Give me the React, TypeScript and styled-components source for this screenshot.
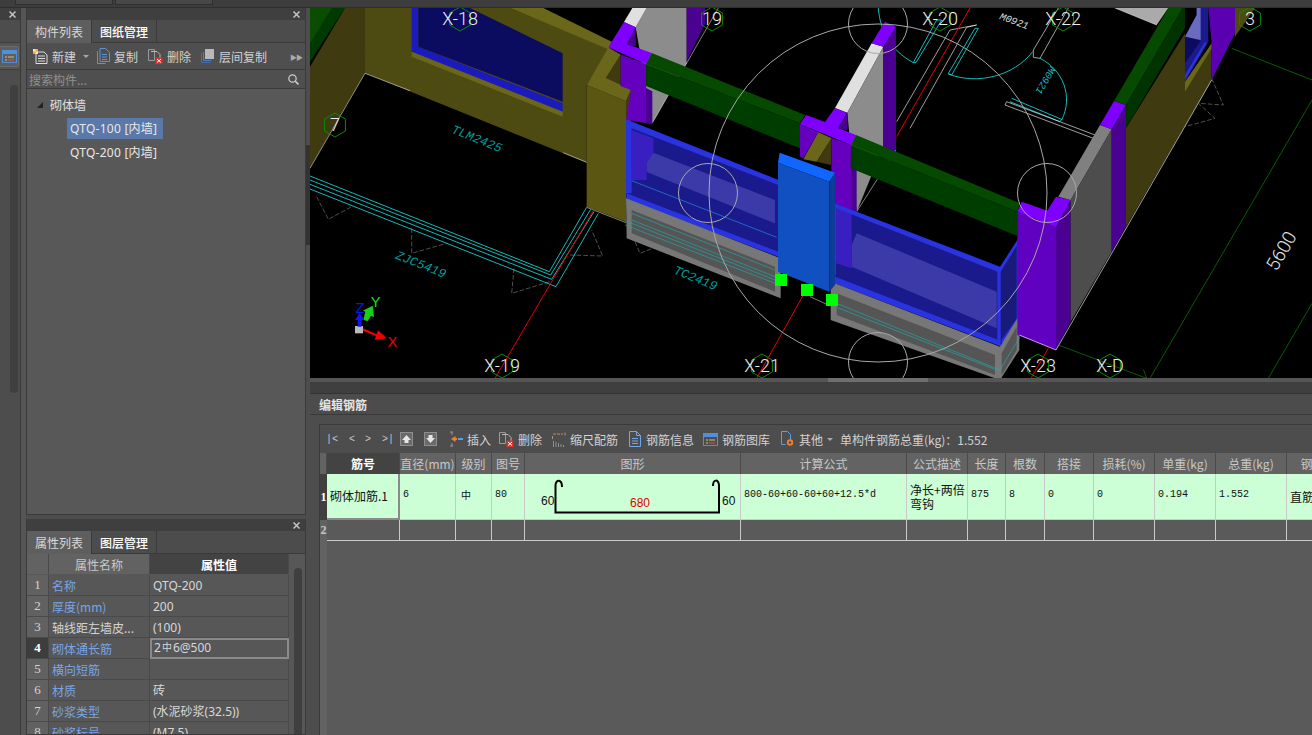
import React from "react";
import styled, { createGlobalStyle } from "styled-components";

const Global = createGlobalStyle`
  html, body { margin: 0; padding: 0; background: #4d4d4d; overflow: hidden; }
  * { box-sizing: border-box; }
`;
const UI = `"Noto Sans", "Noto Sans CJK SC", "Liberation Sans", sans-serif`;
const CJK = `"Noto Sans CJK SC", "Noto Sans", sans-serif`;
const MONO = `"Liberation Mono", "Noto Sans CJK SC", monospace`;

const Page = styled.div`
  width: 1312px; height: 735px; overflow: hidden; display: flex; flex-direction: column;
  background: #4d4d4d; font-family: ${UI}; font-size: 12px; color: #ddd;
`;
const TopBar = styled.div`
  height: 8px; flex: none; display: flex; gap: 2px; padding-left: 15px;
  background: #3d3d3d; border-bottom: 1px solid #2f2f2f;
`;
const TopTab = styled.div`
  width: 98px; height: 5px; background: #474747; border: 1px solid #2f2f2f; border-top: 0;
`;
const Body = styled.div`flex: 1; display: flex; min-height: 0;`;
const Strip = styled.div`
  width: 21px; flex: none; display: flex; flex-direction: column; background: #4d4d4d; border-right: 1px solid #3a3a3a;
`;
const StripHead = styled.div`
  height: 12px; background: #3f3f3f; display: flex; align-items: center; justify-content: flex-end; padding-right: 4px;
`;
const StripIcon = styled.div`
  margin-top: 22px; height: 28px; display: flex; align-items: center; background: #555;
  border-top: 1px solid #3e3e3e; border-bottom: 1px solid #3e3e3e;
`;
const StripBtn = styled.div`
  width: 19px; height: 21px; display: flex; align-items: center; justify-content: center;
  border: 1px solid #6c6c6c; border-left: 0; border-radius: 0 3px 3px 0; background: #5e5e5e;
`;
const StripBar = styled.div`
  width: 8px; height: 308px; margin: 15px 0 0 10px; border-radius: 4px; background: #3f3f3f;
`;
const Gutter = styled.div`width: 5px; flex: none; background: #555;`;
const Panels = styled.div`width: 280px; flex: none; display: flex; flex-direction: column;`;
const Panel = styled.section<{ $h: number }>`
  height: ${p => p.$h}px; flex: none; display: flex; flex-direction: column; background: #555;
  border: 1px solid #3a3a3a; border-top: 0; overflow: hidden;
`;
const PanelHead = styled.div`
  height: 12px; flex: none; background: #3f3f3f; display: flex; align-items: center; justify-content: flex-end; padding-right: 5px;
`;
const Tabs = styled.div`
  height: 23px; flex: none; display: flex; background: #4c4c4c; border-bottom: 1px solid #3a3a3a;
`;
const Tab = styled.div<{ $on?: boolean }>`
  width: 65px; display: flex; align-items: center; justify-content: center; font-size: 12px; font-family: ${CJK};
  background: ${p => (p.$on ? "#5e5e5e" : "#4c4c4c")}; color: ${p => (p.$on ? "#d8d8d8" : "#fff")};
  font-weight: ${p => (p.$on ? 400 : 500)}; border-right: 1px solid #3a3a3a; height: ${p => (p.$on ? "23px" : "22px")};
`;
const ToolRow = styled.div`
  height: 27px; flex: none; display: flex; align-items: center; background: #4f4f4f; border-bottom: 1px solid #3a3a3a; position: relative;
`;
const ToolItem = styled.div<{ $w: number }>`
  width: ${p => p.$w}px; flex: none; display: flex; align-items: center; gap: 4px; color: #d2d2d2; font-family: ${CJK}; white-space: nowrap;
`;
const More = styled.div`
  position: absolute; right: 3px; top: 9px; color: #aaa; font-size: 7px; letter-spacing: -1px;
`;
const Search = styled.div`
  height: 19px; flex: none; display: flex; align-items: center; justify-content: space-between; padding: 0 6px 0 2px;
  background: #4f4f4f; border-bottom: 1px solid #3a3a3a; color: #8f8f8f; font-family: ${CJK};
`;
const Tree = styled.div`flex: 1; background: #585858; padding-top: 5px;`;
const TreeRoot = styled.div`
  height: 21px; display: flex; align-items: center; padding-left: 10px; gap: 7px; color: #e0e0e0; font-family: ${CJK};
`;
const TreeItem = styled.div<{ $on?: boolean }>`
  margin: 3px 0 0 40px; width: 96px; height: 21px; line-height: 21px; padding-left: 3px; white-space: nowrap; letter-spacing: .25px;
  background: ${p => (p.$on ? "#5a78a8" : "transparent")}; color: #e8e8e8; font-size: 12px;
`;
const Caret = styled.span`
  width: 0; height: 0; border-left: 3px solid transparent; border-right: 3px solid transparent; border-top: 3px solid #aaa; flex: none;
`;
const TreeArrow = styled.span`
  width: 0; height: 0; border-bottom: 6px solid #222; border-left: 6px solid transparent; flex: none;
`;
const Spacer = styled.div<{ $h: number }>`height: ${p => p.$h}px; flex: none; background: #4d4d4d;`;

const PropWrap = styled.div`flex: 1; display: flex; background: #575757; min-height: 0;`;
const PropGrid = styled.div`
  width: 262px; flex: none; display: grid; grid-template-columns: 22px 101px 139px; grid-auto-rows: 21px; align-content: start;
`;
const PropHead = styled.div<{ $dark?: boolean }>`
  height: 20px; display: flex; align-items: center; justify-content: center; font-family: ${CJK};
  background: ${p => (p.$dark ? "#434343" : "#626262")}; color: ${p => (p.$dark ? "#fff" : "#c9c9c9")};
  font-weight: ${p => (p.$dark ? 700 : 400)}; border-right: 1px solid #4a4a4a;
`;
const PropNo = styled.div<{ $on?: boolean }>`
  display: flex; align-items: center; justify-content: center; font-family: "Liberation Serif", serif; font-size: 13px;
  font-weight: ${p => (p.$on ? 700 : 400)}; background: ${p => (p.$on ? "#3d3d3d" : "#616161")}; color: ${p => (p.$on ? "#fff" : "#d4d4d4")};
  border-bottom: 1px solid #4a4a4a; border-right: 1px solid #4a4a4a;
`;
const PropName = styled.div<{ $plain?: boolean }>`
  display: flex; align-items: center; padding-left: 3px; color: ${p => (p.$plain ? "#d4d4d4" : "#79a5e6")};
  border-bottom: 1px solid #4a4a4a; border-right: 1px solid #4a4a4a;
  white-space: nowrap; overflow: hidden; font-family: ${CJK};
`;
const PropVal = styled.div<{ $on?: boolean }>`
  display: flex; align-items: center; color: #d8d8d8; white-space: nowrap; font-family: ${UI};
  padding: ${p => (p.$on ? "0 0 2px 2px" : "0 0 0 3px")};
  border: ${p => (p.$on ? "2px solid #8a8a8a" : "0")}; border-bottom: ${p => (p.$on ? "2px solid #8a8a8a" : "1px solid #4a4a4a")};
  border-right: ${p => (p.$on ? "2px solid #8a8a8a" : "1px solid #4a4a4a")};
`;
const Sup = styled.span`font-size: 10px; margin: -3px 1px 0; font-family: ${CJK};`;
const PropScroll = styled.div`flex: 1; padding: 14px 0 0 5px;`;
const Thumb = styled.div`width: 8px; height: 170px; border-radius: 4px; background: #3f3f3f;`;
const Split = styled.div`width: 4px; flex: none; background: #4d4d4d; padding-top: 137px;`;
const SplitThumb = styled.div`height: 100px; background: #333;`;

const Main = styled.div`flex: 1; min-width: 0; display: flex; flex-direction: column;`;
const Canvas = styled.svg`width: 1002px; height: 370px; flex: none; display: block; background: #000;`;
const HSplit = styled.div`
  height: 4px; flex: none; background: #555; display: flex; padding-left: 518px;
`;
const HSplitKnob = styled.div`width: 100px; height: 4px; background: #6e6e6e;`;
const DarkBand = styled.div`height: 12px; flex: none; background: #3f3f3f; border-bottom: 1px solid #333;`;
const Title = styled.div`
  height: 21px; flex: none; background: #4c4c4c; border-bottom: 1px solid #393939; display: flex; align-items: center; padding-left: 9px;
  font-weight: 700; color: #e4e4e4; font-family: ${CJK};
`;
const Editor = styled.div`flex: 1; background: #4d4d4d; padding: 9px 0 0 9px; min-height: 0;`;
const EditorInner = styled.div`height: 100%; display: flex; flex-direction: column; border-top: 1px solid #3a3a3a; border-left: 1px solid #3a3a3a;`;
const EditBar = styled.div`
  height: 28px; flex: none; display: flex; align-items: center; padding-left: 6px; color: #d2d2d2; white-space: nowrap;
`;
const Nav = styled.span<{ $w: number }>`
  width: ${p => p.$w}px; flex: none; font-family: "Liberation Mono", monospace; font-size: 10px; color: #c8c8c8;
`;
const Grid = styled.div`
  display: grid; flex: none;
  grid-template-columns: 7px 73px 56px 36px 33px 216px 166px 61px 38px 39px 49px 61px 61px 71px 40px;
  grid-template-rows: 21px 46px 21px; width: 1027px;
`;
const Head = styled.div<{ $dark?: boolean }>`
  display: flex; align-items: center; justify-content: center; white-space: nowrap; overflow: hidden; font-family: ${CJK};
  background: ${p => (p.$dark ? "#434343" : "#636363")}; color: ${p => (p.$dark ? "#fff" : "#c8c8c8")};
  font-weight: ${p => (p.$dark ? 700 : 400)}; border-right: 1px solid #4a4a4a;
`;
const RowNo = styled.div<{ $on?: boolean }>`
  display: flex; align-items: center; justify-content: center; font-family: "Liberation Serif", serif; font-weight: 700; font-size: 12px;
  background: ${p => (p.$on ? "#404040" : "#626262")}; color: ${p => (p.$on ? "#fff" : "#c5c5c5")}; overflow: visible;
`;
const Cell = styled.div<{ $sel?: boolean; $mono?: boolean; $pad?: number }>`
  background: #ccffd5; color: #111; display: flex; align-items: center;
  padding: ${p => (p.$pad !== undefined ? `0 0 0 ${p.$pad}px` : p.$mono ? "0 0 3px 3px" : "0 0 0 3px")};
  border-right: ${p => (p.$sel ? "2px solid #8a8a8a" : "1px solid #c9c9c9")}; border-bottom: ${p => (p.$sel ? "2px solid #8a8a8a" : "1px solid #c9c9c9")};
  font-family: ${p => (p.$mono ? MONO : CJK)}; font-size: ${p => (p.$mono ? "10px" : "12px")}; line-height: 14px; white-space: ${p => (p.$mono ? "nowrap" : "normal")}; overflow: hidden;
`;
const EmptyCell = styled.div`background: #5a5a5a; border-right: 1px solid #c9c9c9; border-bottom: 1px solid #c9c9c9;`;
const ShapeSvg = styled.svg`width: 215px; height: 45px; display: block;`;
const GridRest = styled.div`flex: 1; background: #5a5a5a; display: flex;`;
const RestEdge = styled.div`width: 7px; background: #626262;`;

const Close = () => (
  <svg width="7" height="7" viewBox="0 0 7 7"><path d="M.5.5l6 6M6.5.5l-6 6" stroke="#c4c4c4" strokeWidth="1.5" /></svg>
);
const Doc = ({ c = "#6fa8e8" }: { c?: string }) => (
  <svg width="14" height="16" viewBox="0 0 14 16" fill="none" stroke={c}>
    <path d="M1.5.5h7l4 4v11h-11zM8.5.5v4h4M4 7.5h6M4 10h6M4 12.5h6" />
  </svg>
);
const NewIc = () => (
  <svg width="15" height="15" viewBox="0 0 15 15" fill="none">
    <path d="M3 3h8l3 3v8.5H3z" stroke="#ddd" /><path d="M5 7h7M5 9.5h7M5 12h7" stroke="#ddd" />
    <rect x="0" y="0" width="5" height="5" fill="#f2a33a" /><path d="M0 0h2.5v2.5H0zM2.5 2.5H5V5H2.5z" fill="#ffe6b0" />
  </svg>
);
const CopyIc = () => (
  <svg width="13" height="16" viewBox="0 0 13 16" fill="none" stroke="#5e93d6">
    <path d="M.5 3v12.5h8M3 .5h5.5l4 4v9H3zM5 6.5h5M5 9h5M5 11.5h5" />
  </svg>
);
const DelIc = () => (
  <svg width="15" height="15" viewBox="0 0 15 15" fill="none">
    <path d="M.5.5h6v11h-6z" stroke="#999" /><path d="M3 2.5h6l3 3v4" stroke="#bbb" />
    <rect x="7.5" y="8.5" width="7" height="6.5" fill="#d9332e" /><path d="M9 10l4 3.5M13 10l-4 3.5" stroke="#fff" />
  </svg>
);
const LayerIc = () => (
  <svg width="14" height="14" viewBox="0 0 14 14">
    <path d="M.5 4v9.5h9" fill="none" stroke="#3f6fb0" /><path d="M2.5 3v8.5h8" fill="none" stroke="#4f80c0" /><rect x="4" y="0" width="9" height="10" fill="#b9b9b9" />
  </svg>
);
const SearchIc = () => (
  <svg width="11" height="11" viewBox="0 0 11 11" fill="none" stroke="#ccc" strokeWidth="1.2"><circle cx="4.5" cy="4.5" r="3.7" /><path d="M7.3 7.3L10.5 10.5" strokeWidth="1.6" /></svg>
);
const LibIc = () => (
  <svg width="15" height="13" viewBox="0 0 15 13">
    <rect x=".5" y=".5" width="14" height="12" fill="none" stroke="#4f8fdc" /><rect x="1" y="1" width="13" height="3" fill="#4f8fdc" />
    <path d="M3 7h2M6 7h6M3 10h2" stroke="#d8c070" /><path d="M6 10h6" stroke="#cc5555" />
  </svg>
);
const ArrowBox = ({ up }: { up?: boolean }) => (
  <svg width="13" height="14" viewBox="0 0 13 14">
    <rect x=".5" y=".5" width="12" height="13" fill="#6a6a6a" stroke="#8e8e8e" />
    <path d={up ? "M6.5 3L11 8H8.5v3h-4V8H2z" : "M6.5 11L11 6H8.5V3h-4v3H2z"} fill="#e6e6e6" />
  </svg>
);
const InsertIc = () => (
  <svg width="14" height="16" viewBox="0 0 14 16" fill="none">
    <path d="M1 1h3M1 15h3" stroke="#999" /><path d="M3 1v3M3 12v3" stroke="#999" />
    <path d="M6.5 5L2 8l4.500 3V9H8V7H6.500z" fill="#ef7f2c" /><path d="M9 7h5v2H9z" fill="#5e9fe0" />
  </svg>
);
const ScaleIc = () => (
  <svg width="14" height="15" viewBox="0 0 14 15" fill="none">
    <path d="M1 2h10" stroke="#ef7f2c" strokeDasharray="3 1" /><path d="M.5 4v3M13 .5v3" stroke="#999" />
    <path d="M1.500 15v-6M4 15v-5M6.500 15v-4M9 15v-3M11.500 15v-2" stroke="#8f8f8f" />
  </svg>
);
const OtherIc = () => (
  <svg width="15" height="16" viewBox="0 0 15 16" fill="none">
    <path d="M1.500.5h6l3 3v6M1.500.5v13h4" stroke="#5e9fe0" />
    <circle cx="10" cy="11.500" r="3.200" fill="#ef7f2c" /><circle cx="10" cy="11.500" r="1.200" fill="#4d4d4d" />
  </svg>
);
const Space = styled.span<{ $w: number }>`display: inline-block; flex: none; width: ${p => p.$w}px;`;

const props: [string, React.ReactNode][] = [
  ["名称", "QTQ-200"], ["厚度(mm)", "200"], ["轴线距左墙皮...", "(100)"], ["砌体通长筋", <>2<Sup>中</Sup>6@500</>],
  ["横向短筋", ""], ["材质", "砖"], ["砂浆类型", "(水泥砂浆(32.5))"], ["砂浆标号", "(M7.5)"],
];
const heads = ["直径(mm)", "级别", "图号", "图形", "计算公式", "公式描述", "长度", "根数", "搭接", "损耗(%)", "单重(kg)", "总重(kg)", "钢"];

const P = ({ d, f }: { d: string; f: string }) => <polygon points={d} fill={f} />;
const L = ({ d, c, w = 1.6, dash }: { d: string; c: string; w?: number; dash?: string }) => (
  <polyline points={d} fill="none" stroke={c} strokeWidth={w} strokeDasharray={dash} />
);
const Hex = ({ x, y }: { x: number; y: number }) => {
  const pts = [0, 1, 2, 3, 4, 5].map(i => {
    const a = (Math.PI / 3) * i + Math.PI / 6;
    return `${(x + 12 * Math.cos(a)).toFixed(1)},${(y + 12 * Math.sin(a)).toFixed(1)}`;
  }).join(" ");
  return <polygon points={pts} fill="none" stroke="#0a8a0a" strokeWidth="1" />;
};
const Axis = ({ x, y, t }: { x: number; y: number; t: string }) => (
  <>
    <Hex x={x} y={y} />
    <text x={x} y={y + 6} fill="#eee" fontFamily="Roboto" fontWeight="300" fontSize="18" textAnchor="middle">{t}</text>
  </>
);
const Lab = ({ x, y, r, t, s = 36, c = "#009c9c" }: { x: number; y: number; r: number; t: string; s?: number; c?: string }) => (
  <text transform={`translate(${x} ${y}) rotate(${r})`} fill={c} fontFamily="Liberation Mono" fontStyle="italic" fontSize={s} textAnchor="middle" dominantBaseline="middle">{t}</text>
);

const CY = "#1fb0b0";
const Scene = () => (
  <Canvas viewBox="310 8 1002 370">
    <g transform="translate(310 0) scale(.33333)">
      <P d="0,24 105,24 0,185" f="#003a00" /><P d="0,24 65,24 0,130" f="#0a4d00" />
      <P d="0,200 105,24 165,24 165,220 0,505" f="#3f3a10" />
      <P d="165,24 600,24 895,145 830,255 830,488 165,220" f="#4d4a12" />
      <P d="600,24 700,24 905,125 895,148" f="#6b671a" />
      <P d="305,24 325,24 325,140 758,310 758,335 305,155" f="#1b1bbd" />
      <P d="325,24 480,24 758,160 758,305 325,140" f="#0b0b60" />
      <P d="305,155 758,335 758,350 305,170" f="#6b671a" />
      <P d="830,255 948,304 948,665 830,620" f="#5b5713" />
      <P d="948,304 963,269 963,365 948,360" f="#3f3a10" />
      <P d="888,234 932,164 932,259" f="#3f3a10" />
      <P d="830,255 895,142 932,164 888,234 963,269 948,304" f="#6b671a" />
      <L d="0,505 165,220 300,272" c="#eee" /><L d="760,458 830,487" c="#eee" /><L d="830,622 948,668" c="#eee" />
      <P d="977,82 1010,24 1130,24 1130,190 1027,369" f="#8c8c8c" />
      <P d="942,66 967,24 1010,24 977,82" f="#e0e0e0" />
      <P d="1130,24 1185,24 1185,70 1130,185" f="#4a0090" />
      <L d="1027,369 1225,24" c="#eee" />
      <P d="932,164 1008,192 1008,369 948,359 963,269 932,259" f="#6600bf" />
      <P d="1008,264 1027,274 1027,374 1008,369" f="#4a0090" />
      <P d="950,132 977,82 977,139" f="#4a0090" />
      <P d="895,142 942,66 977,82 950,132 1025,159 1008,192" f="#8000ff" />
      <P d="1008,192 1025,159 1485,345 1470,370" f="#054a00" />
      <P d="1008,192 1470,370 1470,445 1008,258" f="#003d00" />
      <P d="948,360 1405,540 1405,770 948,598" f="#1a1a8c" />
      <P d="965,390 1030,415 1030,478 1010,490 1010,540 965,540" f="#3a1fc0" />
      <P d="1010,490 1030,458 1395,600 1395,670 1010,516" f="#3c3aa8" />
      <P d="948,358 1405,540 1405,555 965,385 965,580 948,580" f="#2a33e0" />
      <P d="950,580 1405,755 1405,770 950,598" f="#2a33e0" />
      <L d="965,542 1400,712" c="#1f8fe0" w={2} />
      <P d="948,595 1400,770 1412,775 1412,895 950,715" f="#777" />
      <P d="965,630 1395,800 1395,875 965,700" f="#555" />
      <L d="965,640 1395,810" c={CY} w={1.8} /><L d="965,660 1395,830" c={CY} w={1.8} />
      <L d="945,662 1395,840" c={CY} w={1.8} /><L d="945,675 1395,850" c={CY} w={1.8} />
      <L d="20,590 55,658 125,620" c="#777" w={2} dash="14 6" />
      <L d="305,685 305,760 410,730" c="#777" w={2} dash="14 6" />
      <L d="612,805 605,880 720,845" c="#777" w={2} dash="14 6" />
      <L d="780,765 878,768 845,690" c="#777" w={2} dash="14 6" />
      <L d="975,725 990,760 1040,740" c="#777" w={2} dash="14 6" />
      <L d="0,528 718,815 830,622" c="#19e6e6" w={2.4} />
      <L d="0,540 722,825 842,628" c="#19e6e6" w={2.4} />
      <L d="0,553 725,838 852,635" c="#19e6e6" w={2.4} />
      <L d="0,567 738,860 865,640" c="#19e6e6" w={2.4} />
      <L d="850,632 555,1135" c="#e60000" w={3} />
      <L d="1480,885 1340,1135" c="#e60000" w={3} />
      <Lab x={500} y={418} r={22} t="TLM2425" s={38} />
      <Lab x={332} y={795} r={22} t="ZJC5419" s={38} />
      <Lab x={1156} y={836} r={22} t="TC2419" s={38} />
      <rect x="135" y="978" width="24" height="22" fill="#bbb" />
      <path d="M160 985l40 18 4-12 26 24-36 4 4-11-40-16z" fill="#f00000" />
      <path d="M160 960l6-25-8-3 30-15 4 35-9-5-10 16z" fill="#18d018" />
      <path d="M143 980v-20h-8l14-22 14 22h-8v20z" fill="#1414ee" />
      <text x="150" y="940" fill="#1414ee" fontFamily="Liberation Sans" fontSize="44" textAnchor="middle">Z</text>
      <text x="197" y="920" fill="#18e018" fontFamily="Liberation Sans" fontSize="44" textAnchor="middle">Y</text>
      <text x="247" y="1042" fill="#f00000" fontFamily="Liberation Sans" fontSize="44" textAnchor="middle">X</text>
    </g>
    <g transform="translate(810 0) scale(.33333)">
      <P d="915,24 1075,24 1040,75" f="#aaa" /><L d="915,24 1040,75" c="#eee" />
      <path d="M205 24C210 90 240 150 310 188" fill="none" stroke="#19e6e6" strokeWidth="2.400" />
      <L d="310,188 380,60 395,60 318,188 310,188" c="#19e6e6" w={2.4} />
      <L d="260,365 420,90 500,75 470,82 300,385" c="#eee" w={2} />
      <L d="260,410 480,24" c="#e60000" w={3} />
      <L d="415,220 495,85 505,85 425,225 415,220" c="#19e6e6" w={2.4} />
      <path d="M415 222C500 255 610 230 668 155" fill="none" stroke="#19e6e6" strokeWidth="2.400" />
      <L d="775,24 690,175 670,172 670,150 700,100 745,24" c="#eee" w={2} />
      <path d="M690 175C760 210 790 290 755 360" fill="none" stroke="#19e6e6" strokeWidth="2.400" />
      <L d="605,295 755,358 750,365 600,305" c="#19e6e6" w={2.4} />
      <L d="590,305 855,405 850,415 585,315 590,305" c="#eee" w={2} />
      <Lab x={612} y={65} r={20} t="M0921" s={30} c="#ddd" />
      <Lab x={705} y={240} r={120} t="M0921" s={30} c="#19bcbc" />
      <P d="75,324 185,130 220,140 112,338" f="#e0e0e0" />
      <P d="112,338 220,140 220,440 140,635" f="#8c8c8c" />
      <P d="185,130 225,65 258,80 220,140" f="#8000ff" />
      <P d="220,140 258,80 258,450 220,520" f="#4a0090" />
      <L d="140,635 258,450" c="#eee" />
      <P d="85,385 112,338 112,390" f="#4a0090" />
      <P d="-30,372 25,397 -20,475 -30,470" f="#6600bf" />
      <P d="25,397 65,415 20,485 -20,478" f="#6b671a" />
      <P d="65,415 63,495 20,485" f="#3f3a10" />
      <P d="65,415 123,435 123,630 63,610" f="#6600bf" />
      <P d="123,500 140,510 140,640 123,630" f="#4a0090" />
      <P d="-30,372 -12,345 45,366 75,324 111,339 84,384 138,405 123,435" f="#8000ff" />
      <P d="123,435 138,405 630,610 622,635" f="#054a00" />
      <P d="123,435 622,635 622,708 122,505" f="#003d00" />
      <P d="62,605 570,805 630,710 630,945 572,1035 62,845" f="#1a1a8c" />
      <P d="125,735 140,700 560,875 560,985 125,800" f="#3c3aa8" />
      <P d="78,625 125,640 125,805 78,790" f="#3a1fc0" />
      <P d="572,815 622,735 622,945 572,1015" f="#1a1a7a" />
      <P d="62,605 570,800 630,708 625,730 572,815 562,815 78,625 78,825 62,825" f="#2a33e0" />
      <P d="562,810 572,810 572,1035 562,1035" f="#2a33e0" />
      <P d="620,730 630,710 630,945 620,960" f="#2a33e0" />
      <P d="62,825 565,1020 575,1040 62,845" f="#2a33e0" />
      <P d="575,1020 628,945 628,950 575,1040" f="#2a33e0" />
      <P d="62,845 570,1040 628,945 628,1050 570,1140 62,960" f="#777" />
      <P d="80,880 555,1065 555,1125 80,945" f="#555" />
      <P d="575,1060 620,980 620,1050 575,1125" f="#555" />
      <L d="80,910 570,1110 630,1010" c={CY} w={1.8} /><L d="80,922 560,1110" c={CY} w={1.8} />
      <P d="-96,488 -91,458 75,518 58,545" f="#1066ff" />
      <P d="-96,488 58,545 58,875 -96,815" f="#1050c0" />
      <P d="58,545 75,518 75,855 58,875" f="#0d3e95" />
      <L d="660,1140 715,1045" c="#e60000" w={3} />
      <P d="622,635 738,682 738,1050 622,1005" f="#6000c0" />
      <P d="738,682 782,600 782,965 738,1050" f="#4a0090" />
      <P d="635,605 712,632 738,590 782,600 738,682 622,635" f="#8000ff" />
      <P d="745,590 870,375 905,388 782,600" f="#808080" />
      <P d="782,600 905,388 905,755 782,965" f="#4d4d4d" />
      <P d="870,375 912,303 948,315 905,388" f="#8000ff" />
      <P d="905,388 948,315 948,680 905,755" f="#4a0090" />
      <P d="948,385 1125,100 1125,270 1205,130 1205,240 948,680" f="#3f3a10" />
      <P d="912,303 1075,24 1118,24 948,315" f="#054a00" />
      <P d="948,315 1118,24 1160,24 948,385" f="#003300" />
      <P d="1125,110 1160,45 1160,24 1195,24 1195,125 1125,245" f="#1a1a8c" />
      <P d="1125,24 1160,24 1125,110" f="#000" />
      <P d="1125,110 1160,45 1160,24 1172,24 1172,120" f="#6a6ac0" />
      <P d="1125,110 1172,122 1125,190" f="#0b0b60" />
      <P d="1125,225 1185,125 1190,130 1125,240" f="#2a33e0" />
      <P d="1125,245 1205,130 1205,145 1125,275" f="#6b671a" />
      <P d="1195,24 1275,24 1275,100 1205,240 1205,130" f="#5a00b0" />
      <P d="1275,24 1335,24 1275,110" f="#4d4a12" />
      <L d="0,890 48,912" c="#eee" /><L d="628,1005 738,1050 1205,240" c="#eee" w={2} />
      <L d="1205,235 1240,315 1165,310 1215,355 1125,380" c="#777" w={2} dash="14 6" />
      <L d="1265,145 1506,240" c="#0a8a0a" w={2} />
      <L d="1020,1135 1506,300" c="#0a8a0a" w={2} />
      <L d="1375,1135 1506,910" c="#0a8a0a" w={2} />
      <L d="745,1035 1010,1135 1000,1108" c="#0a8a0a" w={2} />
      <text transform="translate(1418 755) rotate(-60)" fill="#e8e8e8" fontFamily="Roboto" fontWeight="300" fontSize="56" textAnchor="middle" dominantBaseline="middle">5600</text>
      <rect x="48" y="882" width="36" height="36" fill="#00ff00" />
    </g>
    <rect x="775" y="274" width="12" height="12" fill="#00ff00" />
    <rect x="801" y="284" width="12" height="12" fill="#00ff00" />
    <g fill="none" stroke="#a8a8a8" strokeWidth="1">
      <circle cx="878" cy="193" r="169" />
      <circle cx="708" cy="193" r="29.5" /><circle cx="1047" cy="193" r="29.5" />
      <circle cx="878" cy="24" r="29.5" /><circle cx="878" cy="362" r="29.5" />
    </g>
    <Axis x={460} y={19} t="X-18" /><Axis x={712} y={19} t="19" /><Axis x={940} y={19} t="X-20" />
    <Axis x={1063} y={19} t="X-22" /><Axis x={1250} y={19} t="3" /><Axis x={335} y={125} t="7" />
    <Axis x={502} y={366} t="X-19" /><Axis x={762} y={366} t="X-21" /><Axis x={1038} y={366} t="X-23" /><Axis x={1110} y={366} t="X-D" />
  </Canvas>
);

export default function App() {
  return (
    <Page>
      <Global />
      <TopBar><TopTab /><TopTab /></TopBar>
      <Body>
        <Strip>
          <StripHead><Close /></StripHead>
          <StripIcon><StripBtn><LibIc /></StripBtn></StripIcon>
          <StripBar />
        </Strip>
        <Gutter />
        <Panels>
          <Panel $h={507}>
            <PanelHead><Close /></PanelHead>
            <Tabs><Tab $on>构件列表</Tab><Tab>图纸管理</Tab></Tabs>
            <ToolRow>
              <Space $w={6} />
              <ToolItem $w={50}><NewIc />新建</ToolItem>
              <Caret /><Space $w={8} />
              <ToolItem $w={50}><CopyIc />复制</ToolItem><Space $w={1} />
              <ToolItem $w={53}><DelIc />删除</ToolItem>
              <ToolItem $w={70}><LayerIc />层间复制</ToolItem>
              <More>▶▶</More>
            </ToolRow>
            <Search>搜索构件...<SearchIc /></Search>
            <Tree>
              <TreeRoot><TreeArrow />砌体墙</TreeRoot>
              <TreeItem $on>QTQ-100 [内墙]</TreeItem>
              <TreeItem>QTQ-200 [内墙]</TreeItem>
            </Tree>
          </Panel>
          <Spacer $h={4} />
          <Panel $h={216}>
            <PanelHead><Close /></PanelHead>
            <Tabs><Tab $on>属性列表</Tab><Tab>图层管理</Tab></Tabs>
            <PropWrap>
              <PropGrid>
                <PropHead /><PropHead>属性名称</PropHead><PropHead $dark>属性值</PropHead>
                {props.map(([n, v], i) => (
                  <React.Fragment key={n}>
                    <PropNo $on={i === 3}>{i + 1}</PropNo>
                    <PropName $plain={i === 2}>{n}</PropName>
                    <PropVal $on={i === 3}>{v}</PropVal>
                  </React.Fragment>
                ))}
              </PropGrid>
              <PropScroll><Thumb /></PropScroll>
            </PropWrap>
          </Panel>
        </Panels>
        <Split><SplitThumb /></Split>
        <Main>
          <Scene />
          <HSplit><HSplitKnob /></HSplit>
          <DarkBand />
          <Title>编辑钢筋</Title>
          <Editor>
            <EditorInner>
              <EditBar>
                <Nav $w={23}>|&lt;</Nav><Nav $w={16}>&lt;</Nav><Nav $w={17}>&gt;</Nav><Nav $w={18}>&gt;|</Nav>
                <ArrowBox up /><Space $w={11} /><ArrowBox /><Space $w={12} />
                <ToolItem $w={50}><InsertIc />插入</ToolItem>
                <ToolItem $w={53}><DelIc />删除</ToolItem>
                <ToolItem $w={76}><ScaleIc />缩尺配筋</ToolItem>
                <ToolItem $w={75}><Doc />钢筋信息</ToolItem>
                <ToolItem $w={77}><LibIc />钢筋图库</ToolItem>
                <ToolItem $w={47}><OtherIc />其他</ToolItem>
                <Caret /><Space $w={7} />
                <ToolItem $w={160}>单构件钢筋总重(kg)：1.552</ToolItem>
              </EditBar>
              <Grid>
                <Head /><Head $dark>筋号</Head>
                {heads.map(h => <Head key={h}>{h}</Head>)}
                <RowNo $on>1</RowNo>
                <Cell $sel>砌体加筋.1</Cell>
                <Cell $mono>6</Cell>
                <Cell $mono $pad={5}>中</Cell>
                <Cell $mono>80</Cell>
                <Cell $pad={0}>
                  <ShapeSvg viewBox="0 0 215 45">
                    <path d="M37 13C37 5 31 5 30.500 11V38.500H194V11C193.500 5 188 5 188 12" fill="none" stroke="#000" strokeWidth="2" />
                    <text x="16" y="31" fontFamily="Liberation Sans" fontSize="12" fill="#111">60</text>
                    <text x="197" y="31" fontFamily="Liberation Sans" fontSize="12" fill="#111">60</text>
                    <text x="115" y="33" fontFamily="Liberation Sans" fontSize="12" fill="#e00000" textAnchor="middle">680</text>
                  </ShapeSvg>
                </Cell>
                <Cell $mono>800-60+60-60+60+12.5*d</Cell>
                <Cell>净长+两倍弯钩</Cell>
                <Cell $mono>875</Cell>
                <Cell $mono>8</Cell>
                <Cell $mono>0</Cell>
                <Cell $mono>0</Cell>
                <Cell $mono>0.194</Cell>
                <Cell $mono>1.552</Cell>
                <Cell>直筋</Cell>
                <RowNo>2</RowNo>
                {Array.from({ length: 14 }, (_, i) => <EmptyCell key={i} />)}
              </Grid>
              <GridRest><RestEdge /></GridRest>
            </EditorInner>
          </Editor>
        </Main>
      </Body>
    </Page>
  );
}
